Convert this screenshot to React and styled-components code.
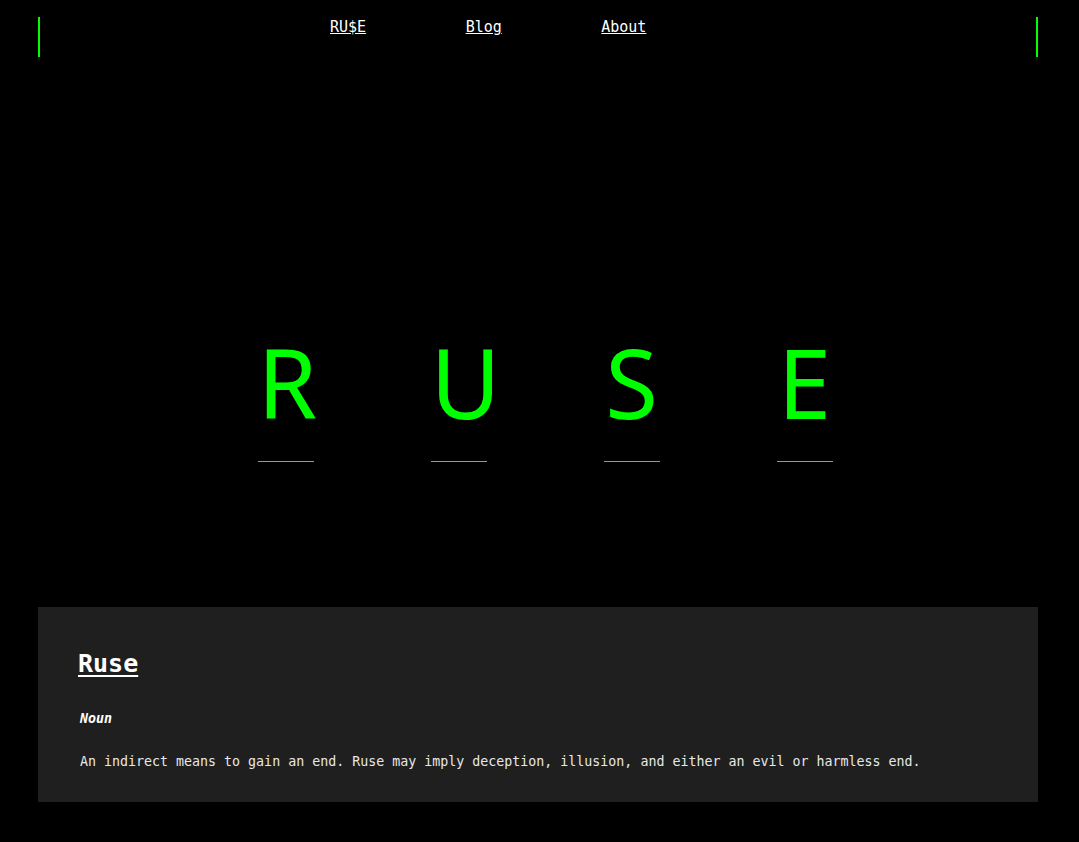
import React from 'react'
import styled, { createGlobalStyle } from 'styled-components'

const GlobalStyle = createGlobalStyle`
  html, body {
    margin: 0;
    padding: 0;
    background: #000;
  }
  body {
    font-family: "DejaVu Sans Mono", "Liberation Mono", monospace;
    color: #fff;
  }
`

const Page = styled.div`
  width: 1000px;
  padding: 17px 0 30px 38px;
  background: #000;
`

const Nav = styled.nav`
  height: 40px;
  box-sizing: border-box;
  border-left: 2px solid #00ff00;
  border-right: 2px solid #00ff00;
  display: flex;
  align-items: flex-start;
  padding: 1px 0 0 290px;
  gap: 99.5px;
`

const NavLink = styled.a`
  color: #fff;
  font-size: 15px;
  line-height: normal;
  text-decoration: underline;
  cursor: pointer;
`

const Hero = styled.section`
  display: flex;
  justify-content: center;
  gap: 117px;
  padding: 277px 0 0 14px;
  height: 550px;
  box-sizing: border-box;
`

const Letter = styled.span`
  width: 56px;
  height: 96px;
  text-align: center;
  font-family: "Noto Sans", "Open Sans", sans-serif;
  font-size: 96px;
  line-height: 96px;
  color: #00ff00;
  padding-bottom: 31px;
  border-bottom: 1px solid #00ff00;
`

const Card = styled.article`
  background: #1f1f1f;
  padding: 42px 40px 33px 42px;
`

const Title = styled.h2`
  margin: 0 0 33px -2px;
  font-size: 25px;
  font-weight: bold;
  line-height: normal;
  text-decoration: underline;
  text-underline-offset: 3px;
  color: #fff;
`

const Kind = styled.p`
  margin: 0 0 28px 0;
  font-size: 13.3px;
  font-weight: bold;
  font-style: italic;
  line-height: normal;
  color: #fff;
`

const Definition = styled.p`
  margin: 0;
  font-size: 13.3px;
  line-height: normal;
  color: #e8e8e8;
`

const letters = ['R', 'U', 'S', 'E']

export default function App() {
  return (
    <>
      <GlobalStyle />
      <Page>
        <Nav>
          <NavLink>RU$E</NavLink>
          <NavLink>Blog</NavLink>
          <NavLink>About</NavLink>
        </Nav>
        <Hero>
          {letters.map((l) => (
            <Letter key={l}>{l}</Letter>
          ))}
        </Hero>
        <Card>
          <Title>Ruse</Title>
          <Kind>Noun</Kind>
          <Definition>
            An indirect means to gain an end. Ruse may imply deception, illusion, and either an evil or harmless end.
          </Definition>
        </Card>
      </Page>
    </>
  )
}
